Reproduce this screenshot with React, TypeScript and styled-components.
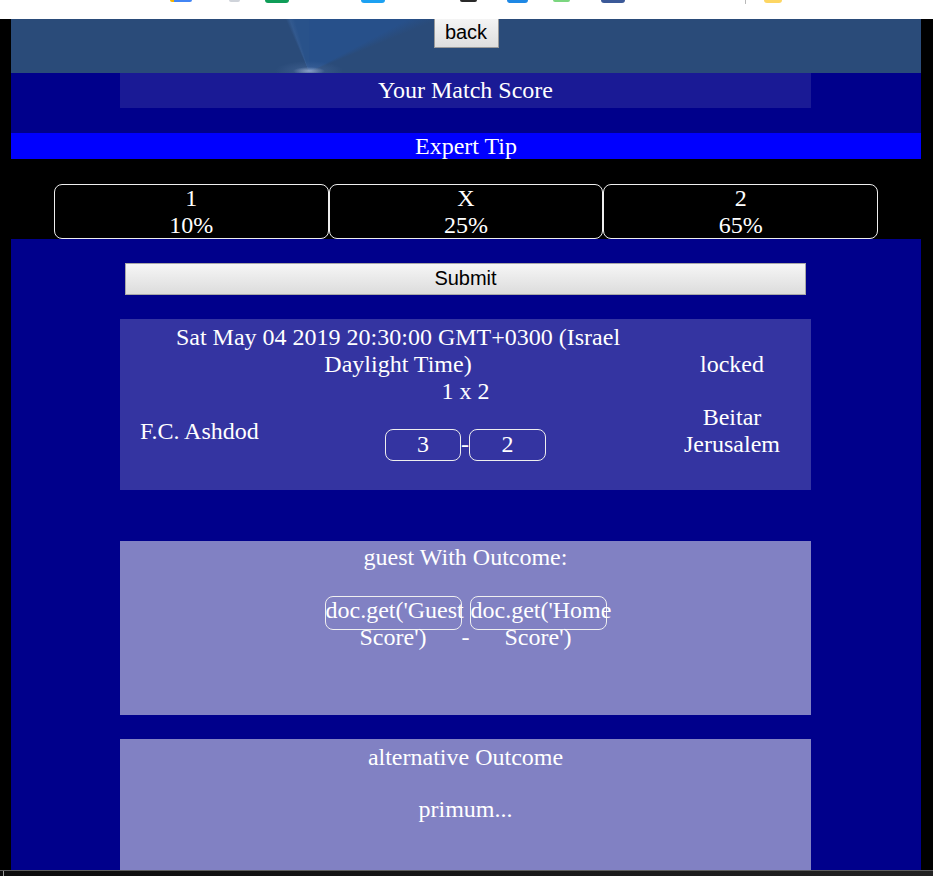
import React from "react";
import styled, { createGlobalStyle } from "styled-components";

const GlobalStyle = createGlobalStyle`
  html, body {
    margin: 0;
    padding: 0;
    overflow: hidden;
    background: #000;
  }
  body {
    font-family: "Liberation Serif", "Times New Roman", serif;
    font-size: 24px;
    color: #fff;
  }
  * { box-sizing: border-box; }
`;

const BookmarkBar = styled.div`
  height: 19px;
  background: #fff;
  display: flex;
  align-items: flex-start;
`;

const Favicon = styled.span<{ $gap: number; $w: number; $h: number; $c: string }>`
  display: block;
  margin-left: ${(p) => p.$gap}px;
  width: ${(p) => p.$w}px;
  height: ${(p) => p.$h}px;
  background: ${(p) => p.$c};
  border-radius: 0 0 4px 4px;
`;

const Page = styled.div`
  margin: 0 12px 0 11px;
  width: 910px;
`;

const Header = styled.div`
  height: 54px;
  display: flex;
  justify-content: center;
  align-items: flex-start;
  background:
    radial-gradient(ellipse 16px 4px at 298px 52px, rgba(190, 205, 235, 0.6), rgba(190, 205, 235, 0) 100%),
    radial-gradient(ellipse 34px 10px at 298px 52px, rgba(110, 140, 190, 0.3), rgba(110, 140, 190, 0) 100%),
    conic-gradient(
      from 0deg at 298px 53px,
      #27508a 0deg 62deg,
      #2a4b79 68deg 336deg,
      #32598f 340deg,
      #29528a 345deg 360deg
    );
`;

const BackButton = styled.button`
  width: 65px;
  height: 29px;
  margin: 0;
  padding: 0 0 2px;
  font-family: "Liberation Sans", Arial, sans-serif;
  font-size: 20px;
  color: #000;
  background: linear-gradient(#f4f4f4, #dedede);
  border: 1px solid #9a9a9a;
  border-top: none;
  cursor: pointer;
`;

const ScoreSection = styled.section`
  background: #00008b;
  padding: 0 110px 25px 109px;
`;

const ScoreTitle = styled.div`
  height: 35px;
  line-height: 35px;
  text-align: center;
  background: #1a1a95;
`;

const TipBar = styled.div`
  height: 26px;
  line-height: 26px;
  text-align: center;
  background: #0000ff;
`;

const OddsSection = styled.section`
  background: #000;
  padding: 25px 43px 0;
  display: flex;
`;

const OddsBox = styled.div`
  flex: 1;
  border: 1px solid #eeeeee;
  border-radius: 8px;
  text-align: center;
  line-height: 26.5px;
`;

const Main = styled.main`
  background: #00008b;
  padding: 24px 0 0;
  min-height: 700px;
`;

const SubmitButton = styled.button`
  display: block;
  width: 681px;
  height: 32px;
  margin: 0 0 0 114px;
  padding: 0 0 1px;
  font-family: "Liberation Sans", Arial, sans-serif;
  font-size: 20px;
  color: #000;
  background: linear-gradient(#f6f6f6, #dcdcdc);
  border: 1px solid #a8a8a8;
  cursor: pointer;
`;

const MatchCard = styled.div`
  margin: 24px 110px 0 109px;
  height: 171px;
  padding-top: 5px;
  background: #3434a1;
  line-height: 27px;
`;

const TopRow = styled.div`
  display: grid;
  grid-template-columns: 1fr 158px;
`;

const DateText = styled.div`
  grid-column: 1;
  grid-row: 1;
  width: 500px;
  margin-left: 28px;
  text-align: center;
`;

const OddsLabel = styled.div`
  grid-column: 1 / -1;
  grid-row: 2;
  text-align: center;
`;

const LockLabel = styled.div`
  grid-column: 2;
  grid-row: 1 / 3;
  align-self: center;
  text-align: center;
`;

const BottomRow = styled.div`
  display: grid;
  grid-template-columns: 1fr auto 1fr;
  align-items: start;
`;

const HomeTeam = styled.div`
  margin-top: 12.5px;
  padding-left: 20px;
`;

const ScoreGroup = styled.div`
  margin-top: 24px;
  white-space: nowrap;
`;

const ScoreBox = styled.div<{ $w: number }>`
  display: inline-block;
  vertical-align: baseline;
  width: ${(p) => p.$w}px;
  height: 32px;
  border: 1px solid #eeeeee;
  border-radius: 8px;
  text-align: center;
  line-height: 29px;
`;

const GuestTeam = styled.div`
  justify-self: end;
  width: 130px;
  margin-right: 14px;
  margin-top: -1px;
  text-align: center;
`;

const OutcomeCard = styled.div<{ $top: number; $pad: number; $h: number }>`
  margin: ${(p) => p.$top}px 110px 0 109px;
  height: ${(p) => p.$h}px;
  padding-top: ${(p) => p.$pad}px;
  background: #8181c3;
  text-align: center;
  line-height: 27px;
`;

const OutcomeRow = styled.div`
  margin-top: 25px;
  text-align: center;
`;

const OutcomeBox = styled.div`
  display: inline-block;
  vertical-align: baseline;
  width: 137px;
  height: 34px;
  border: 1px solid #f0f0f0;
  border-radius: 8px;
  text-align: center;
  line-height: 27px;
`;

const Taskbar = styled.div`
  position: fixed;
  left: 0;
  right: 0;
  bottom: 0;
  height: 6px;
  background: linear-gradient(90deg, #0c0c0c, #1a1a1a 60%, #222 100%);
  border-top: 1px solid #5e5e5e;
  &::before {
    content: "";
    display: block;
    margin-left: 3px;
    width: 2px;
    height: 5px;
    border-left: 1px solid #9a9a9a;
  }
`;

const favicons = [
  { gap: 170, w: 22, h: 2, c: "linear-gradient(90deg,#f4b400 0 20%,#4285f4 20%)" },
  { gap: 37, w: 11, h: 2, c: "#cfd3da" },
  { gap: 25, w: 24, h: 3, c: "#0f9d58" },
  { gap: 72, w: 24, h: 3, c: "#1da1f2" },
  { gap: 75, w: 17, h: 2, c: "#2a2a2a" },
  { gap: 30, w: 21, h: 3, c: "#1e88e5" },
  { gap: 25, w: 17, h: 2, c: "#7bd67f" },
  { gap: 31, w: 24, h: 3, c: "#3b5998" },
  { gap: 120, w: 1, h: 4, c: "#b8b8b8" },
  { gap: 18, w: 18, h: 3, c: "#fdd663" },
];

export default function App() {
  return (
    <>
      <GlobalStyle />
      <BookmarkBar>
        {favicons.map((f, i) => (
          <Favicon key={i} $gap={f.gap} $w={f.w} $h={f.h} $c={f.c} />
        ))}
      </BookmarkBar>
      <Page>
        <Header>
          <BackButton>back</BackButton>
        </Header>
        <ScoreSection>
          <ScoreTitle>Your Match Score</ScoreTitle>
        </ScoreSection>
        <TipBar>Expert Tip</TipBar>
        <OddsSection>
          <OddsBox>
            1
            <br />
            10%
          </OddsBox>
          <OddsBox>
            X
            <br />
            25%
          </OddsBox>
          <OddsBox>
            2
            <br />
            65%
          </OddsBox>
        </OddsSection>
        <Main>
          <SubmitButton>Submit</SubmitButton>
          <MatchCard>
            <TopRow>
              <DateText>Sat May 04 2019 20:30:00 GMT+0300 (Israel Daylight Time)</DateText>
              <OddsLabel>1 x 2</OddsLabel>
              <LockLabel>locked</LockLabel>
            </TopRow>
            <BottomRow>
              <HomeTeam>F.C. Ashdod</HomeTeam>
              <ScoreGroup>
                <ScoreBox $w={76}>3</ScoreBox>-<ScoreBox $w={77}>2</ScoreBox>
              </ScoreGroup>
              <GuestTeam>Beitar Jerusalem</GuestTeam>
            </BottomRow>
          </MatchCard>
          <OutcomeCard $top={51} $pad={3} $h={174}>
            <div>guest With Outcome:</div>
            <OutcomeRow>
              <OutcomeBox>doc.get('Guest Score')</OutcomeBox>-<OutcomeBox>doc.get('Home Score')</OutcomeBox>
            </OutcomeRow>
          </OutcomeCard>
          <OutcomeCard $top={24} $pad={5} $h={220}>
            <div>alternative Outcome</div>
            <OutcomeRow>primum...</OutcomeRow>
          </OutcomeCard>
        </Main>
      </Page>
      <Taskbar />
    </>
  );
}
